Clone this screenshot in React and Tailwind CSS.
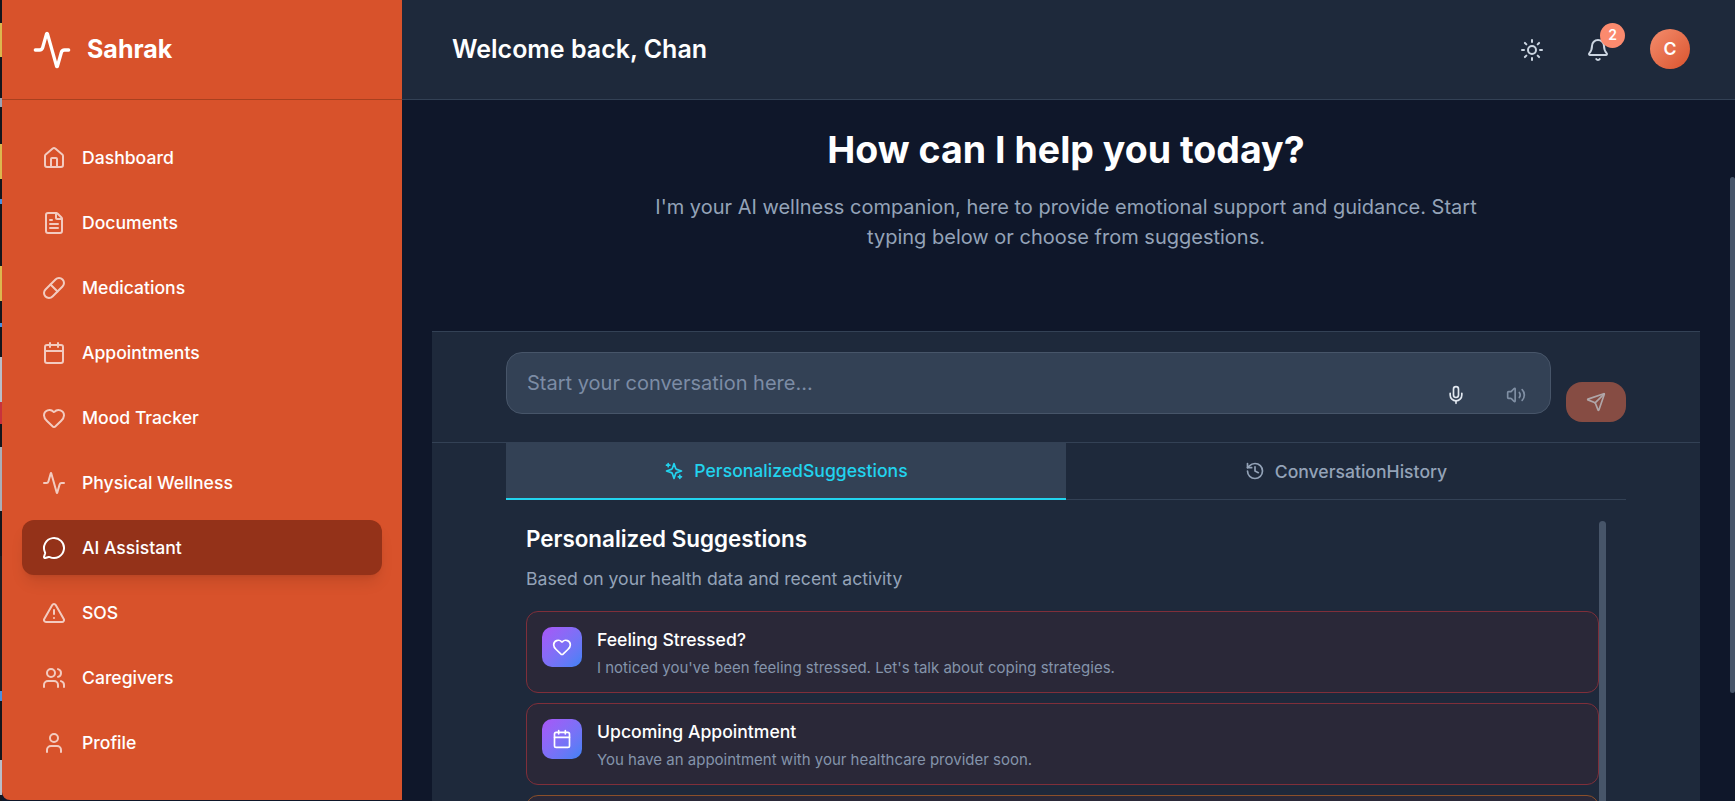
import {
  Activity, House, FileText, Pill, Calendar, Heart, MessageCircle, TriangleAlert, Users, User,
  Sun, Bell, Mic, Volume2, Send, History,
} from 'lucide-react'

const FONT = 'font-["Inter","Liberation_Sans",sans-serif]'

const NAV = [
  { label: 'Dashboard', icon: House },
  { label: 'Documents', icon: FileText },
  { label: 'Medications', icon: Pill },
  { label: 'Appointments', icon: Calendar },
  { label: 'Mood Tracker', icon: Heart },
  { label: 'Physical Wellness', icon: Activity },
  { label: 'AI Assistant', icon: MessageCircle, active: true },
  { label: 'SOS', icon: TriangleAlert },
  { label: 'Caregivers', icon: Users },
  { label: 'Profile', icon: User },
]

const SUGGESTIONS = [
  { title: 'Feeling Stressed?', text: "I noticed you've been feeling stressed. Let's talk about coping strategies.", icon: Heart },
  { title: 'Upcoming Appointment', text: 'You have an appointment with your healthcare provider soon.', icon: Calendar },
]

// the 2px of another window showing at the left edge of the capture
const EDGE = [
  'h-[23px] bg-[#14161c]', 'h-[34px] bg-[#dcb84e]', 'h-[41px] bg-[#14161c]', 'h-[10px] bg-[#9aa3b5]',
  'h-[37px] bg-[#14161c]', 'h-[35px] bg-[#dcb84e]', 'h-[20px] bg-[#14161c]', 'h-[5px] bg-[#4a8fe0]',
  'h-[62px] bg-[#14161c]', 'h-[35px] bg-[#dcb84e]', 'h-[23px] bg-[#14161c]', 'h-[4px] bg-[#4a8fe0]',
  'h-[30px] bg-[#14161c]', 'h-[45px] bg-[#b9bec8]', 'h-[22px] bg-[#c8323c]', 'h-[23px] bg-[#14161c]',
  'h-[65px] bg-[#a9aeb8]', 'h-[45px] bg-[#14161c]', 'h-[135px] bg-[#1c1e24]', 'h-[10px] bg-[#4a8fe0]',
  'h-[60px] bg-[#14161c]', 'h-[35px] bg-[#b9bec8]', 'h-[6px] bg-[#14161c]',
]

function Sidebar() {
  return (
    <aside className="w-[400px] shrink-0 h-[800px] bg-[#d8522b] rounded-bl-lg flex flex-col">
      <div className="h-[100px] shrink-0 border-b border-[#a8401f] pl-[30px] flex items-center gap-[15px]">
        <Activity size={40} className="text-white" />
        <span className="text-[25px] font-bold text-white">Sahrak</span>
      </div>
      <nav className="px-5 pt-[30px] flex flex-col gap-2.5">
        {NAV.map(({ label, icon: Icon, active }) => (
          <div
            key={label}
            className={
              active
                ? 'h-[55px] px-5 rounded-xl flex items-center gap-4 bg-[#943219] text-white shadow-lg'
                : 'h-[55px] px-5 rounded-xl flex items-center gap-4 text-white'
            }
          >
            <Icon size={24} strokeWidth={2} className={active ? 'opacity-100' : 'opacity-70'} />
            <span className="text-[17.6px] font-medium pt-0.5">{label}</span>
          </div>
        ))}
      </nav>
    </aside>
  )
}

function Header() {
  return (
    <header className="h-[100px] shrink-0 bg-[#1e293b] border-b border-[#334155] pl-[50px] pr-[45px] flex items-center">
      <h1 className="text-[25px] font-semibold text-white">Welcome back, Chan</h1>
      <div className="ml-auto flex items-center">
        <Sun size={24} className="text-[#cbd5e1]" />
        <div className="relative ml-[42px]">
          <Bell size={24} className="text-[#cbd5e1]" />
          <span className="absolute -top-[15px] left-[14px] w-[25px] h-[25px] rounded-full bg-[#fb8a6e] text-white text-sm font-semibold flex items-center justify-center">2</span>
        </div>
        <div className="ml-[40px] -mt-px w-10 h-10 rounded-full bg-gradient-to-br from-[#f48c6c] to-[#d9532c] text-white text-[17.6px] font-semibold flex items-center justify-center">C</div>
      </div>
    </header>
  )
}

function SuggestionCard({ title, text, icon: Icon }) {
  return (
    <div className="h-[82px] rounded-xl border border-[#7f2f3a] bg-[#2a2838] pl-[15px] pt-[15px] flex gap-[15px]">
      <div className="w-10 h-10 rounded-[10px] bg-gradient-to-br from-[#a855f7] to-[#3b82f6] flex items-center justify-center">
        <Icon size={20} className="text-white" />
      </div>
      <div className="pt-px">
        <div className="text-[17.6px] font-medium text-white leading-6">{title}</div>
        <div className="text-[15px] text-[#8494ab] mt-[6px] leading-5">{text}</div>
      </div>
    </div>
  )
}

function Composer() {
  return (
    <div className="h-[111px] shrink-0 border-b border-[#334155] px-[74px] pt-5 flex items-start">
      <div className="w-[1045px] h-[62px] rounded-2xl bg-[#334155] border border-[#475569] pl-5 relative">
        <div className="pt-[16px] text-xl leading-7 text-[#7c8ca5]">Start your conversation here...</div>
        <div className="absolute right-[24px] top-[32px] flex items-center gap-10">
          <Mic size={20} className="text-[#e2e8f0]" />
          <Volume2 size={20} className="text-[#94a3b8] opacity-80" />
        </div>
      </div>
      <div className="ml-[15px] mt-[30px] w-[60px] h-10 rounded-2xl bg-[#864c43] flex items-center justify-center">
        <Send size={20} className="text-[#b0a6a8]" />
      </div>
    </div>
  )
}

function Tabs() {
  return (
    <div className="mx-[74px] h-[57px] shrink-0 flex">
      <div className="w-[560px] bg-[#334155] border-b-2 border-[#22d3ee] text-[#22d3ee] flex items-center justify-center gap-2.5">
        <svg width="20" height="20" viewBox="0 0 24 24" fill="none" stroke="currentColor" strokeWidth="2" strokeLinecap="round" strokeLinejoin="round">
          <path d="m12 3-1.912 5.813a2 2 0 0 1-1.275 1.275L3 12l5.813 1.912a2 2 0 0 1 1.275 1.275L12 21l1.912-5.813a2 2 0 0 1 1.275-1.275L21 12l-5.813-1.912a2 2 0 0 1-1.275-1.275L12 3Z" />
          <path d="M5 3v4M19 17v4M3 5h4M17 19h4" />
        </svg>
        <span className="text-[17.6px] font-medium pt-0.5">PersonalizedSuggestions</span>
      </div>
      <div className="flex-1 border-b border-[#334155] text-[#94a3b8] flex items-center justify-center gap-2.5">
        <History size={20} />
        <span className="text-[17.6px] font-medium pt-0.5">ConversationHistory</span>
      </div>
    </div>
  )
}

export default function App() {
  return (
    <div className={`h-[801px] w-[1735px] overflow-hidden flex bg-[#0f172a] ${FONT}`}>
      <div className="w-0.5 shrink-0 flex flex-col">
        {EDGE.map((c, i) => <div key={i} className={c} />)}
      </div>
      <Sidebar />
      <main className="flex-1 min-w-0 flex flex-col">
        <Header />
        <div className="flex-1 min-h-0 flex overflow-hidden">
          <div className="flex-1 min-w-0 flex flex-col pl-[30px] pr-[30px]">
            <div className="h-[231px] shrink-0 pt-[26px] text-center">
              <h2 className="text-[37.5px] font-bold text-white leading-[48px]">How can I help you today?</h2>
              <p className="mt-[18px] mx-auto max-w-[850px] text-xl leading-[30px] text-[#94a3b8]">
                I'm your AI wellness companion, here to provide emotional support and guidance. Start typing below or choose from suggestions.
              </p>
            </div>
            <section className="flex-1 min-h-0 border-t border-[#334155] bg-[#1e293b] flex flex-col overflow-hidden">
              <Composer />
              <Tabs />
              <div className="mx-[74px] pl-5 pr-5 pt-[21px] flex min-h-0">
                <div className="flex-1 min-w-0">
                  <h3 className="text-[22.4px] leading-9 font-semibold text-white">Personalized Suggestions</h3>
                  <p className="mt-[10px] text-[17.6px] leading-6 text-[#94a3b8]">Based on your health data and recent activity</p>
                  <div className="mt-[20px] flex flex-col gap-2.5">
                    {SUGGESTIONS.map(s => <SuggestionCard key={s.title} {...s} />)}
                    <div className="h-[82px] rounded-xl border border-[#8a4f2a] bg-[#2a2838]" />
                  </div>
                </div>
                <div className="w-[7px] shrink-0 h-[400px] rounded-full bg-[#475569]" />
              </div>
            </section>
          </div>
          <div className="w-[5px] shrink-0 pt-[77px]">
            <div className="h-[516px] bg-[#475569] rounded-full" />
          </div>
        </div>
      </main>
    </div>
  )
}
